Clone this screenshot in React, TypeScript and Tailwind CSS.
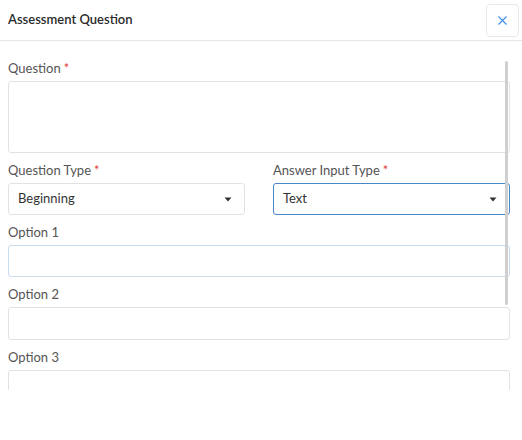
import { X } from 'lucide-react';

const Label = ({ text, required, className = '' }: { text: string; required?: boolean; className?: string }) => (
  <div className={`text-[13px] leading-[16px] text-[#555] mb-[5px] ${className}`}>
    {text}
    {required && <span className="text-[#e53935] ml-[3px]">*</span>}
  </div>
);

const Caret = () => (
  <svg width="8" height="5" viewBox="0 0 8 5" className="mr-[3px]">
    <path d="M0.5 0.5h7L4 4.5z" fill="#333" />
  </svg>
);

const Select = ({ value, focused }: { value: string; focused?: boolean }) => (
  <div
    className={
      focused
        ? 'h-[32px] flex items-center justify-between pl-[9px] pr-[9px] rounded-[3px] border border-[#4a87c7] text-[13px] text-[#333]'
        : 'h-[32px] flex items-center justify-between pl-[9px] pr-[9px] rounded-[3px] border border-[#e2e2e2] text-[13px] text-[#333]'
    }
  >
    <span>{value}</span>
    <Caret />
  </div>
);

export default function App() {
  return (
    <div className="w-[522px] h-[440px] bg-white font-['Lato',sans-serif] overflow-hidden">
      <div className="h-[41px] flex items-center justify-between pl-[8px] pr-[3px] border-b border-[#e5e7eb]">
        <h1 className="text-[13px] font-semibold text-[#2b2b2b]">Assessment Question</h1>
        <button className="w-[33px] h-[33px] flex items-center justify-center rounded-[4px] border border-[#e6eaf0] text-[#3d8ef0]">
          <X size={15} strokeWidth={1.75} />
        </button>
      </div>

      <div className="relative h-[349px] overflow-hidden">
        <div className="pl-[8px] pr-[12px] pt-[19px]">
          <Label text="Question" required />
          <div className="h-[72px] rounded-[3px] border border-[#e2e2e2]" />

          <div className="grid grid-cols-[237px_237px] gap-x-[28px] mt-[9px]">
            <div>
              <Label text="Question Type" required className="mb-[4px]" />
              <Select value="Beginning" />
            </div>
            <div>
              <Label text="Answer Input Type" required className="mb-[4px]" />
              <Select value="Text" focused />
            </div>
          </div>

          <div className="mt-[9px]">
            <Label text="Option 1" />
            <div className="h-[32px] rounded-[3px] border border-[#c9dcef]" />
          </div>
          <div className="mt-[9px]">
            <Label text="Option 2" />
            <div className="h-[33px] rounded-[3px] border border-[#e2e2e2]" />
          </div>
          <div className="mt-[9px]">
            <Label text="Option 3" />
            <div className="h-[33px] rounded-[3px] border border-[#e2e2e2]" />
          </div>
        </div>
        <div className="absolute left-[505px] top-[20px] w-[3px] h-[244px] rounded-full bg-[#cfcfcf]" />
      </div>
    </div>
  );
}
